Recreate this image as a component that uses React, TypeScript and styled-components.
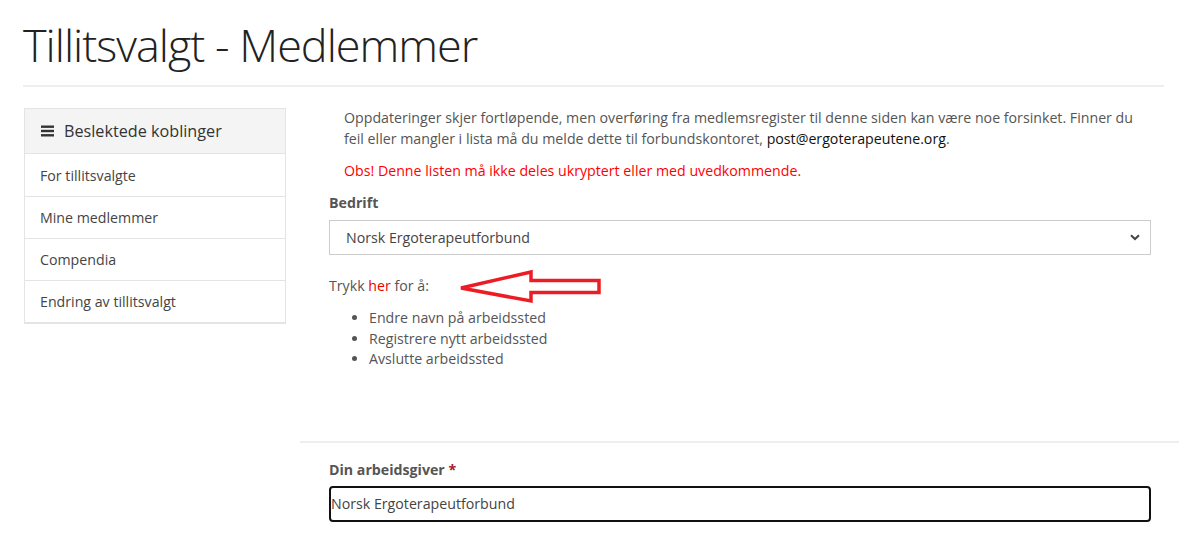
import React from "react";
import styled, { createGlobalStyle } from "styled-components";

const Global = createGlobalStyle`
  html, body { margin: 0; padding: 0; background: #fff; }
  body { font-family: "Open Sans", "Noto Sans", sans-serif; color: #555; font-size: 14.2px; }
  * { box-sizing: border-box; }
`;

const Page = styled.div`
  width: 1199px;
  padding: 14px 0 0 0;
`;

const Header = styled.header`
  margin: 0 35px 0 23px;
  border-bottom: 2px solid #eee;
  padding-bottom: 9px;
`;

const Title = styled.h1`
  margin: 0;
  font-family: "Open Sans", sans-serif;
  font-weight: 300;
  font-size: 45px;
  line-height: 62px;
  color: #222;
  letter-spacing: -1px;
`;

const Body = styled.div`
  display: flex;
  align-items: flex-start;
  margin-top: 21px;
  padding-left: 24px;
`;

const Sidebar = styled.nav`
  width: 262px;
  flex: none;
  border: 1px solid #e4e4e4;
  border-bottom-width: 2px;
`;

const SideHead = styled.div`
  background: #f4f4f4;
  height: 45px;
  display: flex;
  align-items: center;
  padding-left: 16px;
  gap: 10px;
  font-size: 16.2px;
  color: #333;
  border-bottom: 1px solid #e4e4e4;
`;

const SideItem = styled.a`
  display: flex;
  align-items: center;
  height: 42px;
  padding-left: 15px;
  font-size: 14.2px;
  color: #444;
  text-decoration: none;
  border-top: 1px solid #e4e4e4;
  &:first-of-type { border-top: none; }
`;

const Main = styled.main`
  width: 879px;
  margin-left: 14px;
  margin-top: -1px;
`;

const Inner = styled.div`
  padding: 0 28px 0 29px;
`;

const Info = styled.p<{ $red?: boolean }>`
  margin: 0;
  padding-left: 15px;
  font-size: 14.2px;
  line-height: 21px;
  color: ${(p) => (p.$red ? "#f00" : "#555")};
  margin-top: ${(p) => (p.$red ? "11px" : "0")};
`;

const Email = styled.a`
  color: #111;
  text-decoration: none;
`;

const Label = styled.label<{ $gap?: number }>`
  display: block;
  font-weight: 700;
  font-size: 14.2px;
  color: #555;
  margin-top: ${(p) => p.$gap ?? 12}px;
  line-height: 20px;
`;

const Req = styled.span`
  color: #a02030;
`;

const SelectBox = styled.div`
  margin-top: 7px;
  height: 35px;
  border: 1px solid #ccc;
  display: flex;
  align-items: center;
  justify-content: space-between;
  padding: 0 10px 0 16px;
  font-size: 14.2px;
  color: #444;
`;

const TrykkRow = styled.div`
  display: flex;
  align-items: center;
  margin-top: 12px;
  height: 36px;
`;

const TrykkText = styled.span`
  font-size: 14.2px;
  color: #555;
`;

const Her = styled.a`
  color: #e00;
  text-decoration: none;
`;

const Arrow = styled.svg`
  margin-left: 28px;
  margin-top: 4px;
  flex: none;
`;

const List = styled.ul`
  margin: 5px 0 0 0;
  padding-left: 40px;
  font-size: 14.2px;
  line-height: 20.5px;
  color: #555;
`;

const Divider = styled.hr`
  border: none;
  border-top: 2px solid #eee;
  margin: 71px 0 0 0;
`;

const InputBox = styled.div`
  margin-top: 6px;
  height: 36px;
  border: 2px solid #111;
  border-radius: 4px;
  display: flex;
  align-items: center;
  font-size: 14.2px;
  color: #444;
`;

const BarsIcon = () => (
  <svg width="13" height="12" viewBox="0 0 13 12">
    <rect x="0" y="0.5" width="13" height="2.4" fill="#333" />
    <rect x="0" y="4.8" width="13" height="2.4" fill="#333" />
    <rect x="0" y="9.1" width="13" height="2.4" fill="#333" />
  </svg>
);

const Chevron = () => (
  <svg width="10" height="7" viewBox="0 0 10 7">
    <path d="M1 1.2 L5 5 L9 1.2" fill="none" stroke="#444" strokeWidth="2" />
  </svg>
);

export default function App() {
  return (
    <Page>
      <Global />
      <Header>
        <Title>Tillitsvalgt - Medlemmer</Title>
      </Header>
      <Body>
        <Sidebar>
          <SideHead>
            <BarsIcon />
            <span>Beslektede koblinger</span>
          </SideHead>
          <SideItem>For tillitsvalgte</SideItem>
          <SideItem>Mine medlemmer</SideItem>
          <SideItem>Compendia</SideItem>
          <SideItem>Endring av tillitsvalgt</SideItem>
        </Sidebar>
        <Main>
          <Inner>
            <Info>
              Oppdateringer skjer fortløpende, men overføring fra medlemsregister til denne siden kan være noe forsinket. Finner du
              feil eller mangler i lista må du melde dette til forbundskontoret, <Email>post@ergoterapeutene.org</Email>.
            </Info>
            <Info $red>Obs! Denne listen må ikke deles ukryptert eller med uvedkommende.</Info>
            <Label>Bedrift</Label>
            <SelectBox>
              <span>Norsk Ergoterapeutforbund</span>
              <Chevron />
            </SelectBox>
            <TrykkRow>
              <TrykkText>
                Trykk <Her>her</Her> for å:
              </TrykkText>
              <Arrow width="146" height="36" viewBox="456 268 146 36">
                <polygon
                  points="460,287 530,271 530,279.5 598,279.5 598,291.5 530,291.5 530,300"
                  fill="none"
                  stroke="#ed1c24"
                  strokeWidth="3.5"
                  strokeLinejoin="miter"
                />
              </Arrow>
            </TrykkRow>
            <List>
              <li>Endre navn på arbeidssted</li>
              <li>Registrere nytt arbeidssted</li>
              <li>Avslutte arbeidssted</li>
            </List>
          </Inner>
          <Divider />
          <Inner>
            <Label $gap={17}>
              Din arbeidsgiver <Req>*</Req>
            </Label>
            <InputBox>Norsk Ergoterapeutforbund</InputBox>
          </Inner>
        </Main>
      </Body>
    </Page>
  );
}
